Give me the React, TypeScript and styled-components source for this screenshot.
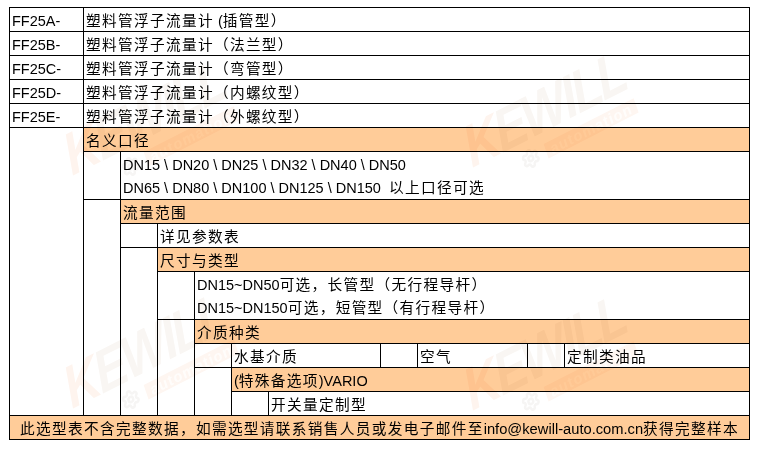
import { Settings } from 'lucide-react'
import styled, { createGlobalStyle } from 'styled-components'

const GlobalStyle = createGlobalStyle`
  html,
  body {
    margin: 0;
    background: #fff;
  }
`

const Page = styled.div`
  position: relative;
  width: 762px;
  height: 452px;
  padding: 7px 0 0 9px;
  box-sizing: border-box;
  overflow: hidden;
`

const Table = styled.table`
  width: 741px;
  border-collapse: collapse;
  table-layout: fixed;
  font-family: 'Liberation Sans', 'Noto Sans CJK SC', sans-serif;
  font-size: 14.5px;
  color: #000;
`

const Cell = styled.td<{ $head?: boolean; $center?: boolean; $upper?: boolean; $lower?: boolean }>`
  height: 24px;
  padding: 2px 2px 0;
  box-sizing: border-box;
  border: 1px solid #000;
  ${(p) => p.$upper && 'border-bottom: none;'}
  ${(p) => p.$lower && 'border-top: none;'}
  line-height: 20px;
  white-space: pre;
  overflow: hidden;
  text-align: ${(p) => (p.$center ? 'center' : 'left')};
  background: ${(p) => (p.$head ? '#ffcc99' : 'transparent')};
`

const Han = styled.span`
  font-family: 'Noto Sans CJK SC', sans-serif;
  font-size: 14.67px;
  line-height: 14px;
  letter-spacing: 1.33px;
`

const Email = styled.span`
  font-size: 14.7px;
`

const Mark = styled.div<{ $x: number; $y: number }>`
  position: absolute;
  left: ${(p) => p.$x}px;
  top: ${(p) => p.$y}px;
  width: 200px;
  transform-origin: 0 44px;
  transform: rotate(-27deg) skewX(-8deg);
  mix-blend-mode: multiply;
  pointer-events: none;
`

const MarkName = styled.div`
  font-family: 'Liberation Sans', sans-serif;
  font-size: 58px;
  line-height: 44px;
  font-weight: 700;
  font-style: italic;
  letter-spacing: -3px;
  white-space: nowrap;
  transform-origin: 0 0;
  transform: scaleX(0.86);
  color: #f9f6f3;

  span {
    color: #fef4ee;
  }
`

const MarkFoot = styled.div`
  display: flex;
  align-items: center;
  gap: 7px;
  margin-top: 6px;
  padding-left: 49px;
  color: #f6f5f4;
`

const MarkBand = styled.div`
  flex: none;
  width: 101px;
  height: 15px;
  background: #fef6f1;
  color: #fffdfb;
  font-family: 'Liberation Sans', sans-serif;
  font-size: 15px;
  line-height: 15px;
  font-weight: 700;
  letter-spacing: 1px;
  text-align: center;
`

const columns = [74, 37, 37, 37, 37, 37, 112, 37, 110, 37, 185]

const models = [
  ['FF25A-', ' (', '插管型）'],
  ['FF25B-', '（', '法兰型）'],
  ['FF25C-', '（', '弯管型）'],
  ['FF25D-', '（', '内螺纹型）'],
  ['FF25E-', '（', '外螺纹型）'],
]

const marks = [
  [73, 134],
  [473, 126],
  [73, 367],
  [473, 369],
]

export default function App() {
  return (
    <Page>
      <GlobalStyle />
      <Table>
        <colgroup>
          {columns.map((width, i) => (
            <col key={i} style={{ width }} />
          ))}
        </colgroup>
        <tbody>
          {models.map(([code, open, rest]) => (
            <tr key={code}>
              <Cell>{code}</Cell>
              <Cell colSpan={10}>
                <Han>塑料管浮子流量计</Han>
                {open === ' (' ? open : <Han>{open}</Han>}
                <Han>{rest}</Han>
              </Cell>
            </tr>
          ))}
          <tr>
            <Cell rowSpan={12} />
            <Cell $head colSpan={10}>
              <Han>名义口径</Han>
            </Cell>
          </tr>
          <tr>
            <Cell rowSpan={2} />
            <Cell $upper colSpan={9}>
              DN15 \ DN20 \ DN25 \ DN32 \ DN40 \ DN50
            </Cell>
          </tr>
          <tr>
            <Cell $lower colSpan={9}>
              DN65 \ DN80 \ DN100 \ DN125 \ DN150{'  '}
              <Han>以上口径可选</Han>
            </Cell>
          </tr>
          <tr>
            <Cell rowSpan={9} />
            <Cell $head colSpan={9}>
              <Han>流量范围</Han>
            </Cell>
          </tr>
          <tr>
            <Cell />
            <Cell colSpan={8}>
              <Han>详见参数表</Han>
            </Cell>
          </tr>
          <tr>
            <Cell rowSpan={7} />
            <Cell $head colSpan={8}>
              <Han>尺寸与类型</Han>
            </Cell>
          </tr>
          <tr>
            <Cell rowSpan={2} />
            <Cell $upper colSpan={7}>
              DN15~DN50<Han>可选，长管型（无行程导杆）</Han>
            </Cell>
          </tr>
          <tr>
            <Cell $lower colSpan={7}>
              DN15~DN150<Han>可选，短管型（有行程导杆）</Han>
            </Cell>
          </tr>
          <tr>
            <Cell rowSpan={4} />
            <Cell $head colSpan={7}>
              <Han>介质种类</Han>
            </Cell>
          </tr>
          <tr>
            <Cell />
            <Cell colSpan={2}>
              <Han>水基介质</Han>
            </Cell>
            <Cell />
            <Cell>
              <Han>空气</Han>
            </Cell>
            <Cell />
            <Cell>
              <Han>定制类油品</Han>
            </Cell>
          </tr>
          <tr>
            <Cell rowSpan={2} />
            <Cell $head colSpan={6}>
              (<Han>特殊备选项</Han>)VARIO
            </Cell>
          </tr>
          <tr>
            <Cell />
            <Cell colSpan={5}>
              <Han>开关量定制型</Han>
            </Cell>
          </tr>
          <tr>
            <Cell $head $center colSpan={11}>
              <Han>此选型表不含完整数据，如需选型请联系销售人员或发电子邮件至</Han>
              <Email>info@kewill-auto.com.cn</Email>
              <Han>获得完整样本</Han>
            </Cell>
          </tr>
        </tbody>
      </Table>
      {marks.map(([x, y]) => (
        <Mark key={`${x}-${y}`} $x={x} $y={y}>
          <MarkName>
            <span>K</span>EWILL
          </MarkName>
          <MarkFoot>
            <Settings size={20} strokeWidth={3} />
            <MarkBand>automation</MarkBand>
          </MarkFoot>
        </Mark>
      ))}
    </Page>
  )
}
